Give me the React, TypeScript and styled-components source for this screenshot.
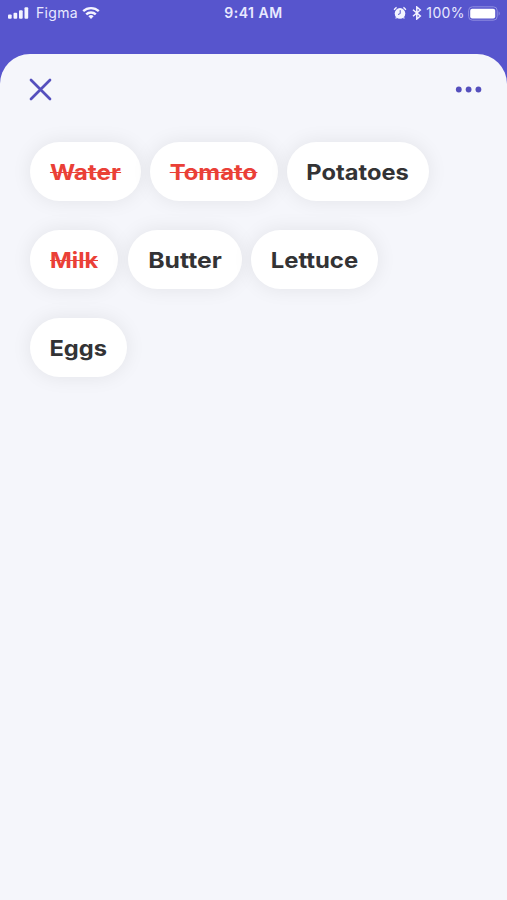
import React from "react";
import styled, { createGlobalStyle } from "styled-components";

const GlobalStyle = createGlobalStyle`
  * { box-sizing: border-box; }
  body { margin: 0; background: #5755cd; }
`;

const Screen = styled.div`
  height: 900px;
  display: flex;
  flex-direction: column;
  overflow: hidden;
  background: #5755cd;
  font-family: Inter, sans-serif;
`;

const StatusBar = styled.header`
  height: 54px;
  flex: none;
  display: grid;
  grid-template-columns: 1fr auto 1fr;
  align-items: start;
  padding: 0 6px 0 8px;
  color: #e9e9ff;
`;

const StatusGroup = styled.div<{ $end?: boolean }>`
  height: 26px;
  display: flex;
  align-items: center;
  justify-content: ${(p) => (p.$end ? "flex-end" : "flex-start")};
`;

const StatusText = styled.span<{ $bold?: boolean; $spacing?: number }>`
  font-size: 14px;
  line-height: 26px;
  font-weight: ${(p) => (p.$bold ? 600 : 400)};
  letter-spacing: ${(p) => p.$spacing ?? 0}px;
`;

const Icon = styled.svg<{ $left?: number }>`
  display: block;
  flex: none;
  margin-left: ${(p) => p.$left ?? 0}px;
`;

const CarrierText = styled(StatusText)`
  margin: 0 4px 0 6px;
`;

const ClockText = styled(StatusText)`
  margin-right: 2px;
`;

const BatteryText = styled(StatusText)`
  margin: 0 3px 0 4px;
`;

const Sheet = styled.main`
  flex: 1;
  border-radius: 30px 30px 0 0;
  background: #f5f6fb;
`;

const SheetBar = styled.div`
  height: 88px;
  display: flex;
  justify-content: space-between;
  align-items: flex-start;
  padding: 23.5px 25px 0 29px;
`;

const IconButton = styled.button`
  display: block;
  padding: 0;
  border: 0;
  background: none;
  color: #554fbd;
`;

const ChipList = styled.div`
  display: flex;
  flex-direction: column;
  gap: 29px;
  padding: 0.4px 0 0 30px;
`;

const ChipRow = styled.div`
  display: flex;
  gap: 9.5px;
`;

const Chip = styled.div<{ $width: number; $done?: boolean }>`
  width: ${(p) => p.$width}px;
  height: 59px;
  display: flex;
  align-items: center;
  justify-content: center;
  border-radius: 30px;
  background: #fff;
  box-shadow: 0 0 20px rgba(0, 0, 0, 0.08);
  color: ${(p) => (p.$done ? "#ea4037" : "#333335")};
`;

const ChipLabel = styled.span<{ $done?: boolean; $stretch: number }>`
  position: relative;
  font-size: 21.5px;
  line-height: 28px;
  font-weight: 700;
  white-space: nowrap;
  transform: scaleX(${(p) => p.$stretch});
  &::after {
    content: "";
    display: ${(p) => (p.$done ? "block" : "none")};
    position: absolute;
    left: 0;
    right: 0;
    top: 14px;
    height: 1px;
    background: #ea4037;
  }
`;

type Item = { name: string; width: number; stretch: number; done?: boolean };

const rows: Item[][] = [
  [
    { name: "Water", width: 110.5, stretch: 1.13, done: true },
    { name: "Tomato", width: 127.5, stretch: 1.11, done: true },
    { name: "Potatoes", width: 142, stretch: 1.1 },
  ],
  [
    { name: "Milk", width: 88, stretch: 1.09, done: true },
    { name: "Butter", width: 114, stretch: 1.15 },
    { name: "Lettuce", width: 127, stretch: 1.11 },
  ],
  [{ name: "Eggs", width: 97, stretch: 1.1 }],
];

const SignalIcon = () => (
  <Icon width="22" height="14" viewBox="0 0 22 14" fill="#f4f4ff">
    <rect x="0" y="8.6" width="3.7" height="4.2" rx="1" />
    <rect x="5.5" y="6.7" width="3.7" height="6.1" rx="1" />
    <rect x="11" y="4.2" width="3.7" height="8.6" rx="1" />
    <rect x="16.5" y="1.3" width="3.7" height="11.5" rx="1" />
  </Icon>
);

const WifiIcon = () => (
  <Icon width="18" height="14" viewBox="0 0 18 14" fill="none" stroke="#f4f4ff" strokeWidth="2.4">
    <path d="M1.2 5.2a11.3 11.3 0 0 1 15.6 0" />
    <path d="M4.2 8.4a7 7 0 0 1 9.6 0" />
    <path d="M9 13 6.4 10.3a3.8 3.8 0 0 1 5.2 0Z" fill="#f4f4ff" stroke="none" />
  </Icon>
);

const AlarmIcon = () => (
  <Icon width="14" height="14" viewBox="0 0 14 14" fill="none">
    <circle cx="7" cy="7.4" r="5.3" fill="#f4f4ff" />
    <path d="M1.2 3.8A6 6 0 0 1 3.6 1.4M10.4 1.4A6 6 0 0 1 12.8 3.8" stroke="#f4f4ff" strokeWidth="1.4" />
    <path d="M3.5 11.4 2.7 12.5M10.5 11.4l.8 1.1" stroke="#f4f4ff" strokeWidth="1.2" />
    <path d="M7.2 4.1v3.5L5 8.5" stroke="#5755cd" strokeWidth="1" />
  </Icon>
);

const BluetoothIcon = () => (
  <Icon $left={5} width="10" height="14" viewBox="0 0 10 14" fill="none" stroke="#f4f4ff" strokeWidth="1.5">
    <path d="M1 3.8 8.3 10 4.8 13V1l3.5 3L1 10.2" />
  </Icon>
);

const BatteryIcon = () => (
  <Icon width="33" height="15" viewBox="0 0 33 15">
    <rect x="0.6" y="0.8" width="28.6" height="13.4" rx="3.8" fill="none" stroke="#8f8de0" strokeWidth="1" />
    <rect x="2.2" y="2.7" width="25" height="9.7" rx="2" fill="#fff" />
    <path d="M30.6 5.3c1.6.7 1.6 3.7 0 4.4Z" fill="#8a88dd" />
  </Icon>
);

export default function App() {
  return (
    <Screen>
      <GlobalStyle />
      <StatusBar>
        <StatusGroup>
          <SignalIcon />
          <CarrierText $spacing={0.3}>Figma</CarrierText>
          <WifiIcon />
        </StatusGroup>
        <StatusGroup>
          <ClockText $bold $spacing={0.5}>
            9:41 AM
          </ClockText>
        </StatusGroup>
        <StatusGroup $end>
          <AlarmIcon />
          <BluetoothIcon />
          <BatteryText $spacing={0.4}>100%</BatteryText>
          <BatteryIcon />
        </StatusGroup>
      </StatusBar>
      <Sheet>
        <SheetBar>
          <IconButton aria-label="Close">
            <Icon width="23" height="23" viewBox="0 0 23 23" stroke="currentColor" strokeWidth="2.7" strokeLinecap="round">
              <path d="M2 2l19 19M21 2 2 21" />
            </Icon>
          </IconButton>
          <IconButton aria-label="More">
            <Icon width="27" height="23" viewBox="0 0 27 23" fill="currentColor">
              <circle cx="3.8" cy="11.5" r="2.9" />
              <circle cx="13.6" cy="11.5" r="2.9" />
              <circle cx="23.4" cy="11.5" r="2.9" />
            </Icon>
          </IconButton>
        </SheetBar>
        <ChipList>
          {rows.map((row, i) => (
            <ChipRow key={i}>
              {row.map((item) => (
                <Chip key={item.name} $width={item.width} $done={item.done}>
                  <ChipLabel $done={item.done} $stretch={item.stretch}>
                    {item.name}
                  </ChipLabel>
                </Chip>
              ))}
            </ChipRow>
          ))}
        </ChipList>
      </Sheet>
    </Screen>
  );
}
